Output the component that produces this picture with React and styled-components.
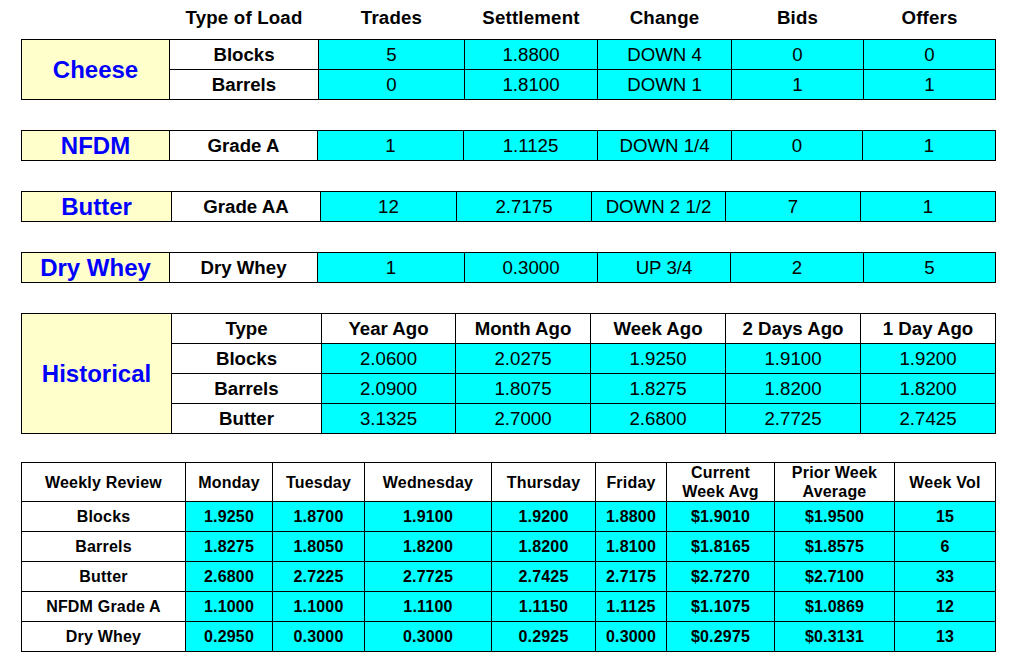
import React from "react";
import styled, {createGlobalStyle, css} from "styled-components";

const GlobalStyle = createGlobalStyle`
  body {
    margin: 0;
    background: #fff;
    color: #000;
    font-family: "Liberation Sans", Arial, sans-serif;
  }
`;

// column widths in px, measured between the 1px grid lines
const headings = ["", "Type of Load", "Trades", "Settlement", "Change", "Bids", "Offers"];

const markets = [
  {
    name: "Cheese",
    cols: [147, 148, 145, 132, 133, 131, 131],
    rows: [
      ["Blocks", "5", "1.8800", "DOWN 4", "0", "0"],
      ["Barrels", "0", "1.8100", "DOWN 1", "1", "1"]
    ]
  },
  {
    name: "NFDM",
    cols: [147, 147, 145, 133, 133, 130, 132],
    rows: [["Grade A", "1", "1.1125", "DOWN 1/4", "0", "1"]]
  },
  {
    name: "Butter",
    cols: [149, 148, 135, 134, 133, 134, 134],
    rows: [["Grade AA", "12", "2.7175", "DOWN 2 1/2", "7", "1"]]
  },
  {
    name: "Dry Whey",
    cols: [147, 147, 146, 132, 132, 132, 131],
    rows: [["Dry Whey", "1", "0.3000", "UP 3/4", "2", "5"]]
  }
];

const historyCols = [149, 149, 133, 134, 134, 134, 134];
const historyHead = ["Type", "Year Ago", "Month Ago", "Week Ago", "2 Days Ago", "1 Day Ago"];
const historyRows = [
  ["Blocks", "2.0600", "2.0275", "1.9250", "1.9100", "1.9200"],
  ["Barrels", "2.0900", "1.8075", "1.8275", "1.8200", "1.8200"],
  ["Butter", "3.1325", "2.7000", "2.6800", "2.7725", "2.7425"]
];

const weeklyCols = [163, 86, 91, 126, 103, 70, 107, 119, 100];
const weeklyHead = [
  "Weekly Review",
  "Monday",
  "Tuesday",
  "Wednesday",
  "Thursday",
  "Friday",
  "Current\nWeek Avg",
  "Prior Week\nAverage",
  "Week Vol"
];
const weeklyRows = [
  ["Blocks", "1.9250", "1.8700", "1.9100", "1.9200", "1.8800", "$1.9010", "$1.9500", "15"],
  ["Barrels", "1.8275", "1.8050", "1.8200", "1.8200", "1.8100", "$1.8165", "$1.8575", "6"],
  ["Butter", "2.6800", "2.7225", "2.7725", "2.7425", "2.7175", "$2.7270", "$2.7100", "33"],
  ["NFDM Grade A", "1.1000", "1.1000", "1.1100", "1.1150", "1.1125", "$1.1075", "$1.0869", "12"],
  ["Dry Whey", "0.2950", "0.3000", "0.3000", "0.2925", "0.3000", "$0.2975", "$0.3131", "13"]
];

const toTemplate = (cols) => cols.map((w) => `${w}px`).join(" ");

export default function App() {
  return (
    <Page>
      <GlobalStyle />

      {/* column titles over the market boards */}
      <Heading $cols={toTemplate(markets[0].cols)}>
        {headings.map((h, i) => (
          <HeadText key={i}>{h}</HeadText>
        ))}
      </Heading>

      {markets.map((m, i) => (
        <Board key={m.name} $cols={toTemplate(m.cols)} $top={i === 0 ? 0 : 30}>
          <Label $span={m.rows.length}>{m.name}</Label>
          {m.rows.map((r) =>
            r.map((v, j) => (
              <Cell key={r[0] + j} $tone={j === 0 ? "type" : "data"}>
                {v}
              </Cell>
            ))
          )}
        </Board>
      ))}

      {/* historical prices */}
      <Board $cols={toTemplate(historyCols)} $top={30}>
        <Label $span={historyRows.length + 1}>Historical</Label>
        {historyHead.map((h) => (
          <Cell key={h} $tone="type">
            {h}
          </Cell>
        ))}
        {historyRows.map((r) =>
          r.map((v, j) => (
            <Cell key={r[0] + j} $tone={j === 0 ? "type" : "data"}>
              {v}
            </Cell>
          ))
        )}
      </Board>

      {/* weekly review */}
      <Board $cols={toTemplate(weeklyCols)} $rows="38px repeat(5, 29px)" $top={28}>
        {weeklyHead.map((h) => (
          <Cell key={h} $tone="type" $small>
            {h}
          </Cell>
        ))}
        {weeklyRows.map((r) =>
          r.map((v, j) => (
            <Cell key={r[0] + j} $tone={j === 0 ? "type" : "data"} $small $bold>
              {v}
            </Cell>
          ))
        )}
      </Board>
    </Page>
  );
}

const Page = styled.div`
  padding: 0 0 17px 21px;
`;

const Heading = styled.div`
  display: grid;
  grid-template-columns: ${(p) => p.$cols};
  grid-template-rows: 39px;
  column-gap: 1px;
  padding: 0 1px;
  width: max-content;
`;

const HeadText = styled.div`
  display: flex;
  align-items: center;
  justify-content: center;
  padding-bottom: 4px;
  font-size: 14pt;
  font-weight: bold;
  letter-spacing: 0.2px;
  white-space: nowrap;
`;

const Board = styled.div`
  display: grid;
  grid-template-columns: ${(p) => p.$cols};
  grid-auto-rows: 29px;
  ${(p) =>
    p.$rows &&
    css`
      grid-template-rows: ${p.$rows};
    `}
  gap: 1px;
  padding: 1px;
  margin-top: ${(p) => p.$top}px;
  width: max-content;
  background: #000;
`;

const Label = styled.div`
  grid-row: span ${(p) => p.$span};
  display: flex;
  align-items: center;
  justify-content: center;
  background: #ffffcc;
  color: #0000ff;
  font-size: 18pt;
  font-weight: bold;
  white-space: nowrap;
`;

const Cell = styled.div`
  display: flex;
  align-items: center;
  justify-content: center;
  text-align: center;
  font-size: 14pt;
  white-space: nowrap;
  background: ${(p) => (p.$tone === "data" ? "#00ffff" : "#fff")};
  font-weight: ${(p) => (p.$tone === "type" || p.$bold ? "bold" : "normal")};

  ${(p) =>
    p.$small &&
    css`
      font-size: 12pt;
      white-space: pre-line;
      line-height: 19px;
      letter-spacing: 0.2px;
    `}
`;
